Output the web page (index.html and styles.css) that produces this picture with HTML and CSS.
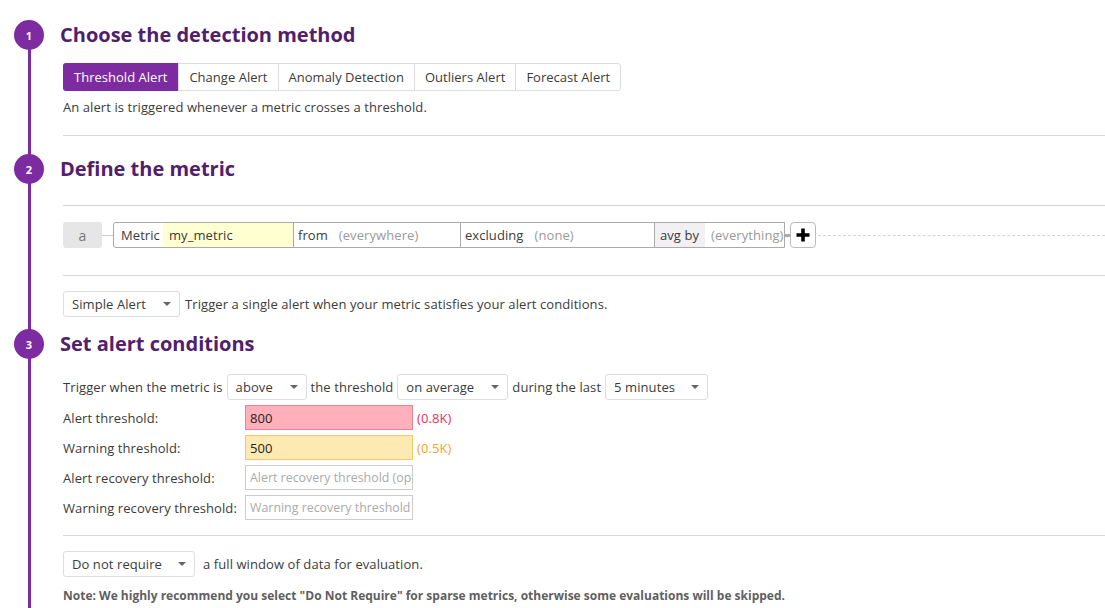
FILE: index.html
```html
<!DOCTYPE html>
<html>
<head>
<meta charset="utf-8">
<link rel="stylesheet" href="styles.css">
</head>
<body>
<div class="page">
  <section class="step">
    <div class="step-head"><span class="badge">1</span><h2>Choose the detection method</h2></div>
    <div class="step-body">
      <div class="tabs">
        <span class="tab active">Threshold Alert</span>
        <span class="tab">Change Alert</span>
        <span class="tab">Anomaly Detection</span>
        <span class="tab">Outliers Alert</span>
        <span class="tab">Forecast Alert</span>
      </div>
      <p class="desc">An alert is triggered whenever a metric crosses a threshold.</p>
      <hr class="rule rule-1">
    </div>
  </section>

  <section class="step">
    <div class="step-head"><span class="badge">2</span><h2>Define the metric</h2></div>
    <div class="step-body">
      <hr class="rule rule-2">
      <div class="metric-row">
        <span class="query-name">a</span>
        <span class="link"></span>
        <div class="query">
          <div class="seg seg-metric"><span class="seg-label">Metric</span><span class="seg-value metric-value">my_metric</span></div>
          <div class="seg seg-from"><span class="seg-label">from</span><span class="seg-ph">(everywhere)</span></div>
          <div class="seg seg-excl"><span class="seg-label">excluding</span><span class="seg-ph">(none)</span></div>
          <div class="seg seg-avg"><span class="seg-label shaded">avg by</span><span class="seg-ph">(everything)</span></div>
        </div>
        <span class="link thick"></span>
        <button class="plus" type="button"><svg width="14" height="14" viewBox="0 0 14 14"><path d="M5.2 0.5h3.6v4.7h4.7v3.6H8.8v4.7H5.2V8.8H0.5V5.2h4.7z" fill="#000"/></svg></button>
        <span class="dash"></span>
      </div>
      <hr class="rule rule-3">
      <div class="inline-row simple-row">
        <span class="select sel-simple">Simple Alert<i class="caret"></i></span>
        <span>Trigger a single alert when your metric satisfies your alert conditions.</span>
      </div>
    </div>
  </section>

  <section class="step">
    <div class="step-head head-3"><span class="badge">3</span><h2>Set alert conditions</h2></div>
    <div class="step-body">
      <div class="inline-row trigger-row">
        <span>Trigger when the metric is</span>
        <span class="select sel-above">above<i class="caret"></i></span>
        <span>the threshold</span>
        <span class="select sel-avg">on average<i class="caret"></i></span>
        <span>during the last</span>
        <span class="select sel-min">5 minutes<i class="caret"></i></span>
      </div>
      <div class="thresholds">
        <label>Alert threshold:</label>
        <div class="field"><span class="input alert">800</span><span class="note-alert">(0.8K)</span></div>
        <label>Warning threshold:</label>
        <div class="field"><span class="input warn">500</span><span class="note-warn">(0.5K)</span></div>
        <label>Alert recovery threshold:</label>
        <div class="field"><span class="input empty">Alert recovery threshold (opt</span></div>
        <label>Warning recovery threshold:</label>
        <div class="field"><span class="input empty">Warning recovery threshold</span></div>
      </div>
      <hr class="rule rule-4">
      <div class="inline-row window-row">
        <span class="select sel-window">Do not require<i class="caret"></i></span>
        <span>a full window of data for evaluation.</span>
      </div>
      <p class="note">Note: We highly recommend you select "Do Not Require" for sparse metrics, otherwise some evaluations will be skipped.</p>
    </div>
  </section>
</div>
</body>
</html>
```

FILE: styles.css
```css
* { box-sizing: border-box; }
html, body { margin: 0; padding: 0; background: #fff; }
body {
  font-family: "Open Sans", "Noto Sans", sans-serif;
  font-size: 13px;
  letter-spacing: 0.08px;
  color: #3b3b3b;
  overflow: hidden;
}
.page {
  position: relative;
  padding-top: 20px;
  height: 608px;
}
.page::before {
  content: "";
  position: absolute;
  left: 28px;
  top: 30px;
  bottom: 0;
  width: 3px;
  background: #7d2ba1;
}
.step-head {
  display: flex;
  align-items: center;
  height: 30px;
  position: relative;
}
.badge {
  width: 30px;
  height: 30px;
  border-radius: 50%;
  background: #7d2ba1;
  color: #fff;
  font-weight: 700;
  font-size: 11px;
  letter-spacing: 0;
  display: flex;
  align-items: center;
  justify-content: center;
  margin-left: 14px;
  margin-right: 16px;
}
h2 {
  margin: 0;
  font-size: 20px;
  font-weight: 700;
  letter-spacing: 0;
  color: #51206d;
  line-height: 30px;
}
.step-body { padding-left: 63px; }

.tabs {
  display: inline-flex;
  margin-top: 13px;
  border: 1px solid #dcdcdc;
  border-radius: 3px;
  height: 28px;
  letter-spacing: 0.02px;
}
.tab {
  display: flex;
  align-items: center;
  padding: 0 10px;
  border-left: 1px solid #dcdcdc;
  color: #3b3b3b;
}
.tab:first-child { border-left: none; }
.tab.active {
  background: #7d2ba1;
  color: #fff;
  margin: -1px 0 -1px -1px;
  padding-left: 11px;
  padding-right: 11px;
  border-radius: 3px 0 0 3px;
}
.desc { margin: 7px 0 0; line-height: 18px; }

.rule { border: 0; border-top: 1px solid #d8d8d8; margin: 0; }
.rule-1 { margin-top: 19px; margin-bottom: 18px; }
.rule-2 { margin-top: 21px; }
.metric-row {
  display: flex;
  align-items: center;
  margin-top: 16px;
  height: 26px;
}
.query-name {
  width: 39px;
  height: 26px;
  background: #e6e6e6;
  border-radius: 3px;
  color: #777;
  display: flex;
  align-items: center;
  justify-content: center;
  font-size: 14px;
}
.link { width: 11px; height: 1px; background: #ccc; }
.link.thick { width: 5px; height: 3px; background: #aaa; }
.query {
  display: flex;
  height: 26px;
  border: 1px solid #aaa;
  border-radius: 3px 0 0 3px;
}
.seg { display: flex; align-items: stretch; border-left: 1px solid #aaa; }
.seg:first-child { border-left: none; }
.seg-label { display: flex; align-items: center; padding: 0 5px 0 4px; color: #3b3b3b; }
.seg-label.shaded { background: #f2f0f2; padding: 0 6px 0 5px; }
.seg-value, .seg-ph { display: flex; align-items: center; }
.metric-value { background: #ffffd2; padding-left: 6px; width: 130px; }
.seg-metric .seg-label { padding: 0 3px 0 7px; }
.seg-ph { color: #9a9a9a; padding-left: 6px; }
.seg-from { width: 167px; }
.seg-excl { width: 194px; }
.seg-avg { width: 130px; }
.seg-avg .seg-ph { padding-left: 6px; }
.plus {
  width: 26px;
  height: 26px;
  border: 1px solid #bbb;
  border-radius: 4px;
  background: #fff;
  padding: 0;
  display: flex;
  align-items: center;
  justify-content: center;
}
.dash {
  flex: 1;
  height: 0;
  border-top: 1px dashed #d5d5d5;
  margin-left: 2px;
}
.rule-3 { margin-top: 27px; }

.inline-row { display: flex; align-items: center; gap: 4px; }
.simple-row { margin-top: 15px; gap: 5px; }
.select {
  display: flex;
  align-items: center;
  justify-content: space-between;
  height: 26px;
  border: 1px solid #ddd;
  border-radius: 3px;
  padding: 0 8px 0 8px;
  color: #3b3b3b;
  flex: none;
}
.caret {
  width: 0; height: 0;
  border-left: 4px solid transparent;
  border-right: 4px solid transparent;
  border-top: 4px solid #666;
}
.sel-simple { width: 117px; }
.sel-above { width: 80px; }
.sel-avg { width: 111px; }
.sel-min { width: 103px; }
.sel-window { width: 132px; }

.head-3 { margin-top: 12px; }
.trigger-row { margin-top: 15px; }
.thresholds {
  display: grid;
  grid-template-columns: 182px 1fr;
  row-gap: 5px;
  margin-top: 5px;
}
.thresholds label { display: flex; align-items: center; height: 25px; }
.field { display: flex; align-items: center; gap: 4px; }
.input {
  width: 168px;
  height: 25px;
  border: 1px solid #ccc;
  display: flex;
  align-items: center;
  padding-left: 4px;
  white-space: nowrap;
  overflow: hidden;
  color: #222;
}
.input.alert { background: #ffb0ba; border-color: #e6848f; }
.input.warn { background: #ffe9b3; border-color: #f2c86e; }
.input.empty { color: #aaa; font-size: 12.4px; letter-spacing: 0; }
.note-alert { color: #e8305a; }
.note-warn { color: #f5a51e; }
.rule-4 { margin-top: 15px; }
.window-row { margin-top: 15px; gap: 8px; }
.note {
  margin: 10px 0 0;
  font-size: 12px;
  font-weight: 700;
  letter-spacing: 0;
  color: #5f5f5f;
  line-height: 18px;
}
```
